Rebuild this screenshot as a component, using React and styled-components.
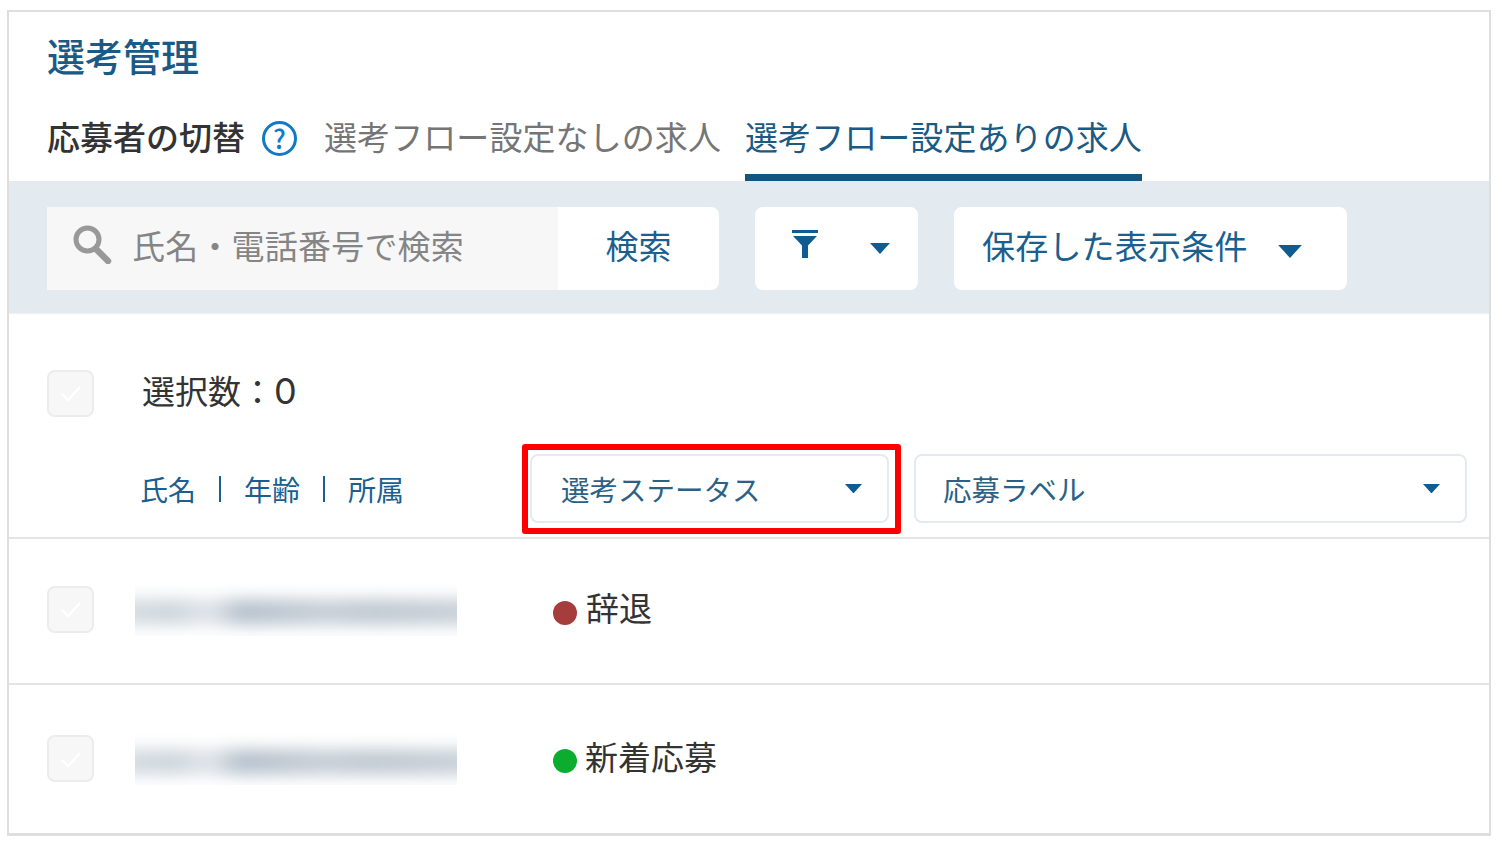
import React from "react";
import styled, { createGlobalStyle } from "styled-components";

const GlobalStyle = createGlobalStyle`
  html, body {
    margin: 0;
    padding: 0;
    background: #fff;
  }
  body {
    font-family: "Noto Sans CJK JP", "Noto Sans", sans-serif;
    color: #333;
  }
  * {
    box-sizing: border-box;
  }
`;

const Page = styled.div`
  width: 1502px;
  height: 846px;
  padding: 10px 11px 10px 7px;
`;

const Frame = styled.div`
  width: 1484px;
  height: 826px;
  border: 2px solid #dedede;
  border-bottom-width: 3px;
  background: #fff;
`;

const Header = styled.header`
  height: 170px;
  padding: 20px 0 0 38px;
  border-bottom: 1px solid #e8e8e8;
`;

const Title = styled.h1`
  margin: 0;
  font-size: 38px;
  line-height: 46px;
  font-weight: 500;
  color: #1a5a85;
`;

const TabRow = styled.div`
  display: flex;
  align-items: flex-start;
  height: 71px;
  margin-top: 32px;
`;

const TabLabel = styled.span`
  font-size: 33px;
  line-height: 52px;
  font-weight: 500;
  color: #333;
`;

const HelpIcon = styled.span`
  width: 35px;
  height: 35px;
  margin: 11px 27px 0 17px;
  border: 3px solid #1279c6;
  border-radius: 50%;
  color: #1279c6;
  font-size: 26px;
  line-height: 28px;
  font-weight: 500;
  text-align: center;
`;

const Tab = styled.div`
  height: 71px;
  margin-right: 24px;
  border-bottom: 7px solid ${(p) => (p.$active ? "#12557f" : "transparent")};
  font-size: 33px;
  line-height: 52px;
  letter-spacing: 0.08px;
  color: ${(p) => (p.$active ? "#1a5a85" : "#757575")};
`;

const Toolbar = styled.div`
  display: flex;
  align-items: center;
  height: 132px;
  padding: 2px 0 0 38px;
  background: #e3ebf1;
  border-bottom: 1px solid #eef1f4;
`;

const SearchBox = styled.div`
  display: flex;
  width: 672px;
  height: 83px;
  border-radius: 0 8px 8px 0;
  overflow: hidden;
  background: #fff;
`;

const SearchField = styled.div`
  display: flex;
  align-items: center;
  width: 511px;
  padding-left: 25px;
  background: #f7f7f7;
  color: #858585;
  font-size: 33px;
`;

const SearchIcon = styled.svg`
  width: 40px;
  height: 40px;
  margin: -10px 20px 0 0;
  flex: none;
`;

const RaisedText = styled.span`
  margin-top: -8px;
  letter-spacing: 0.2px;
`;

const SearchButton = styled.div`
  flex: 1;
  text-align: center;
  font-size: 33px;
  line-height: 77px;
  color: #1a5f8f;
`;

const ToolButton = styled.div`
  display: flex;
  align-items: center;
  width: ${(p) => p.$w}px;
  height: 83px;
  margin-left: ${(p) => p.$gap}px;
  padding-left: ${(p) => p.$pad}px;
  border-radius: 8px;
  background: #fff;
  font-size: 33px;
  color: #1a5f8f;
`;

const FilterIcon = styled.svg`
  width: 26px;
  height: 28px;
  margin: -10px 52px 0 0;
`;

const Caret = styled.svg`
  flex: none;
  width: ${(p) => p.$size}px;
  height: ${(p) => p.$size / 2 + 1}px;
  margin-top: ${(p) => p.$top || 0}px;
  margin-left: ${(p) => p.$gap || 0}px;
`;

const SelectRow = styled.div`
  display: flex;
  align-items: center;
  height: 46px;
  margin-top: 56px;
  padding-left: 38px;
`;

const Check = styled.span`
  display: flex;
  align-items: center;
  justify-content: center;
  flex: none;
  width: 47px;
  height: 47px;
  border: 2px solid #ececec;
  border-radius: 8px;
  background: #f7f7f7;
`;

const CheckMark = styled.svg`
  width: 24px;
  height: 24px;
`;

const SelectCount = styled.span`
  margin: -6px 0 0 48px;
  font-size: 33px;
  line-height: 46px;
`;

const CountValue = styled.span`
  font-family: Inter, sans-serif;
  font-size: 36px;
  font-weight: 400;
`;

const ColumnRow = styled.div`
  display: flex;
  height: 85px;
  margin-top: 38px;
  padding: 0 0 14px 131px;
  border-bottom: 2px solid #e5e5e5;
`;

const ColumnLinks = styled.div`
  display: flex;
  align-items: center;
  width: 390px;
  font-size: 28px;
  color: #1a5f8f;
`;

const LinkSep = styled.span`
  width: 2px;
  height: 26px;
  margin: 0 23px 0 23px;
  background: #1a5f8f;
`;

const SelectWrap = styled.div`
  position: relative;
  width: ${(p) => p.$w}px;
  margin-left: ${(p) => p.$gap || 0}px;
`;

const SelectBox = styled.div`
  display: flex;
  align-items: center;
  justify-content: space-between;
  height: 69px;
  padding: 0 25px 0 ${(p) => p.$pad}px;
  border: 2px solid #e3ebf0;
  border-radius: 8px;
  font-size: 28.5px;
  color: #2a6287;
`;

const Highlight = styled.span`
  position: absolute;
  top: -10px;
  right: -12px;
  bottom: -11px;
  left: -8px;
  border: 6px solid #f00;
  border-radius: 3px;
  pointer-events: none;
`;

const Row = styled.div`
  display: flex;
  align-items: center;
  height: ${(p) => p.$h}px;
  padding: 0 0 ${(p) => p.$pb}px 38px;
  border-bottom: 2px solid #e5e5e5;

  &:last-child {
    border-bottom: 0;
  }
`;

const BlurredName = styled.div`
  display: flex;
  align-items: center;
  justify-content: center;
  flex: none;
  width: 322px;
  height: 53px;
  margin-left: 41px;
  padding-top: 6px;
  overflow: hidden;
  background: #fff;
`;

const BlurredBar = styled.span`
  flex: none;
  width: 360px;
  height: 26px;
  background: linear-gradient(
    90deg,
    #d6dce2 0%,
    #ced6dc 16%,
    #dfe4e9 26%,
    #b6c1cc 35%,
    #bcc6d0 44%,
    #c6ced6 58%,
    #c0c9d2 72%,
    #c9d1d8 100%
  );
  filter: blur(8px);
`;

const Status = styled.div`
  display: flex;
  align-items: center;
  margin-left: 96px;
  font-size: 33px;
  line-height: 46px;
`;

const StatusText = styled.span`
  margin-top: ${(p) => p.$top}px;
`;

const Dot = styled.span`
  width: 24px;
  height: 24px;
  margin: ${(p) => p.$top}px ${(p) => p.$gap}px 0 0;
  border-radius: 50%;
  background: ${(p) => p.$c};
`;

const caret = (size, gap, top) => (
  <Caret $size={size} $gap={gap} $top={top} viewBox="0 0 20 11">
    <path d="M0 0H20L10 11Z" fill="#0f5c92" />
  </Caret>
);

const check = (
  <Check>
    <CheckMark viewBox="0 0 24 24">
      <path d="M3 13l6 6L21 6" fill="none" stroke="#fff" strokeWidth="2.5" />
    </CheckMark>
  </Check>
);

const ApplicantRow = ({ h, pb, color, gap, dotTop, textTop, label }) => (
  <Row $h={h} $pb={pb}>
    {check}
    <BlurredName>
      <BlurredBar />
    </BlurredName>
    <Status>
      <Dot $c={color} $gap={gap} $top={dotTop} />
      <StatusText $top={textTop}>{label}</StatusText>
    </Status>
  </Row>
);

const App = () => {
  return (
    <Page>
      <GlobalStyle />
      <Frame>
        <Header>
          <Title>選考管理</Title>
          <TabRow>
            <TabLabel>応募者の切替</TabLabel>
            <HelpIcon>?</HelpIcon>
            <Tab>選考フロー設定なしの求人</Tab>
            <Tab $active>選考フロー設定ありの求人</Tab>
          </TabRow>
        </Header>

        <Toolbar>
          <SearchBox>
            <SearchField>
              <SearchIcon viewBox="0 0 40 40">
                <circle cx="15.5" cy="15.5" r="11.5" fill="none" stroke="#999" strokeWidth="5" />
                <path d="M24 25l12 12" stroke="#999" strokeWidth="6.5" strokeLinecap="round" />
              </SearchIcon>
              <RaisedText>氏名・電話番号で検索</RaisedText>
            </SearchField>
            <SearchButton>検索</SearchButton>
          </SearchBox>
          <ToolButton $w={163} $gap={36} $pad={37}>
            <FilterIcon viewBox="0 0 26 28">
              <path d="M0 0H26V3H0ZM1 6H25L16 15.5V28H10V15.5Z" fill="#0f5c92" />
            </FilterIcon>
            {caret(20)}
          </ToolButton>
          <ToolButton $w={393} $gap={36} $pad={28}>
            <RaisedText>保存した表示条件</RaisedText>
            {caret(24, 30, 6)}
          </ToolButton>
        </Toolbar>

        <SelectRow>
          {check}
          <SelectCount>
            選択数：<CountValue>0</CountValue>
          </SelectCount>
        </SelectRow>

        <ColumnRow>
          <ColumnLinks>
            氏名
            <LinkSep />
            年齢
            <LinkSep />
            所属
          </ColumnLinks>
          <SelectWrap $w={359}>
            <SelectBox $pad={29}>
              選考ステータス
              {caret(17)}
            </SelectBox>
            <Highlight />
          </SelectWrap>
          <SelectWrap $w={553} $gap={25}>
            <SelectBox $pad={27}>
              応募ラベル
              {caret(17)}
            </SelectBox>
          </SelectWrap>
        </ColumnRow>

        <ApplicantRow h={146} pb={4} color="#a63c3c" gap={9} dotTop={8} textTop={-4} label="辞退" />
        <ApplicantRow h={149} pb={2} color="#0aad2e" gap={8} dotTop={4} textTop={-6} label="新着応募" />
      </Frame>
    </Page>
  );
};

export default App;
